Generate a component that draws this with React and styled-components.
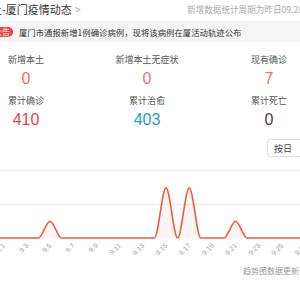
import React from "react";
import styled, { createGlobalStyle } from "styled-components";

const Global = createGlobalStyle`
  html, body { margin: 0; padding: 0; background: #fff; }
  body { width: 300px; height: 300px; overflow: hidden; font-family: "Noto Sans CJK SC", "Noto Sans", sans-serif; }
`;

const Page = styled.div`
  width: 300px;
  height: 300px;
  overflow: hidden;
  position: relative;
`;

const Header = styled.div`
  display: grid;
  grid-template-columns: 187px auto;
  align-items: center;
  height: 17px;
  white-space: nowrap;
  overflow: hidden;
`;

const Title = styled.div`
  font-size: 11px;
  color: #333;
  margin-left: -20px;
  display: flex;
  align-items: center;
  gap: 3px;
`;

const Chevron = styled.span`
  color: #aaa;
  font-size: 11px;
`;

const Meta = styled.div`
  font-size: 8.6px;
  color: #aaa;
`;

const Notice = styled.div`
  margin-top: 4px;
  height: 21px;
  background: #f5f5f5;
  display: flex;
  align-items: center;
  gap: 6px;
  white-space: nowrap;
  overflow: hidden;
`;

const Badge = styled.span`
  background: #e8423f;
  color: #fff;
  font-size: 8px;
  line-height: 10px;
  padding: 0 3px 0 0;
  border-radius: 0 5px 5px 0;
  margin-left: -6px;
`;

const NoticeText = styled.span`
  font-size: 8.4px;
  color: #333;
`;

const StatsRow = styled.div`
  display: flex;
  justify-content: space-between;
  padding: ${p => p.$top}px 12px 0 8px;
`;

const Stat = styled.div`
  display: flex;
  flex-direction: column;
  align-items: center;
  width: ${p => p.$w}px;
`;

const Label = styled.div`
  font-size: 9px;
  line-height: 12px;
  color: #555;
  white-space: nowrap;
`;

const Value = styled.div`
  font-family: "Liberation Sans", Arial, sans-serif;
  font-size: 16px;
  line-height: 18px;
  margin-top: 4px;
  color: ${p => p.$c};
`;

const ChartBox = styled.div`
  position: relative;
  margin-top: 9px;
  height: 125px;
`;

const Select = styled.div`
  position: absolute;
  top: 1px;
  left: 267px;
  width: 40px;
  height: 18px;
  border: 1px solid #ddd;
  border-radius: 3px;
  box-sizing: border-box;
  font-size: 9px;
  color: #444;
  display: flex;
  align-items: center;
  padding-left: 6px;
  background: #fff;
`;

const Footer = styled.div`
  text-align: left;
  padding-left: 243px;
  font-size: 8px;
  color: #999;
  white-space: nowrap;
  margin-top: 2px;
`;

const x = d => 3.6 + (d - 1) * 11.6;
const BASE = 100;
const UNIT = 16.75;
const vals = {};
for (let d = 1; d <= 28; d++) vals[d] = 0;
vals[5] = 1; vals[15] = 3; vals[17] = 3; vals[21] = 1;

function buildPath() {
  let prevX = x(1) - 11.6 * 2, prevY = BASE;
  let p = `M${prevX},${BASE}`;
  for (let d = 1; d <= 28; d++) {
    const nx = x(d), ny = BASE - vals[d] * UNIT;
    const dx = nx - prevX;
    p += ` C${prevX + dx / 3},${prevY} ${nx - dx / 3},${ny} ${nx},${ny}`;
    prevX = nx; prevY = ny;
  }
  p += ` L320,${BASE}`;
  return p;
}
const linePath = buildPath();
const areaPath = linePath + ` L320,${BASE} L-30,${BASE} Z`;

const labels = [];
for (let d = 1; d <= 27; d += 2) labels.push(d);

export default function App() {
  return (
    <Page>
      <Global />
      <Header>
        <Title>本土-厦门疫情动态<Chevron>&gt;</Chevron></Title>
        <Meta>新增数据统计周期为昨日09.28</Meta>
      </Header>
      <Notice>
        <Badge>公告</Badge>
        <NoticeText>厦门市通报新增1例确诊病例，现将该病例在厦活动轨迹公布</NoticeText>
      </Notice>
      <StatsRow $top={12}>
        <Stat $w={36}><Label>新增本土</Label><Value $c="#f76f5c">0</Value></Stat>
        <Stat $w={64}><Label>新增本土无症状</Label><Value $c="#f76f5c">0</Value></Stat>
        <Stat $w={38}><Label>现有确诊</Label><Value $c="#f76f5c">7</Value></Stat>
      </StatsRow>
      <StatsRow $top={7}>
        <Stat $w={36}><Label>累计确诊</Label><Value $c="#e8423f">410</Value></Stat>
        <Stat $w={64}><Label>累计治愈</Label><Value $c="#21a7b3">403</Value></Stat>
        <Stat $w={38}><Label>累计死亡</Label><Value $c="#444">0</Value></Stat>
      </StatsRow>
      <ChartBox>
        <svg width="300" height="125" viewBox="0 0 300 125">
          <line x1="0" x2="300" y1="32.5" y2="32.5" stroke="#eee" strokeWidth="1" />
          <line x1="0" x2="300" y1="66.5" y2="66.5" stroke="#eee" strokeWidth="1" />
          <path d={areaPath} fill="rgba(241,90,58,0.06)" stroke="none" />
          <path d={linePath} fill="none" stroke="#f25a3a" strokeWidth="1.6" />
          {labels.map(d => (
            <text key={d} transform={`translate(${x(d) + 2},${BASE + 8}) rotate(-45)`} textAnchor="end" fontSize="7" fill="#a0a0a0" fontFamily="Liberation Sans, Arial, sans-serif">9.{d}</text>
          ))}
        </svg>
        <Select>按日</Select>
      </ChartBox>
      <Footer>趋势图数据更新至09.28</Footer>
    </Page>
  );
}
